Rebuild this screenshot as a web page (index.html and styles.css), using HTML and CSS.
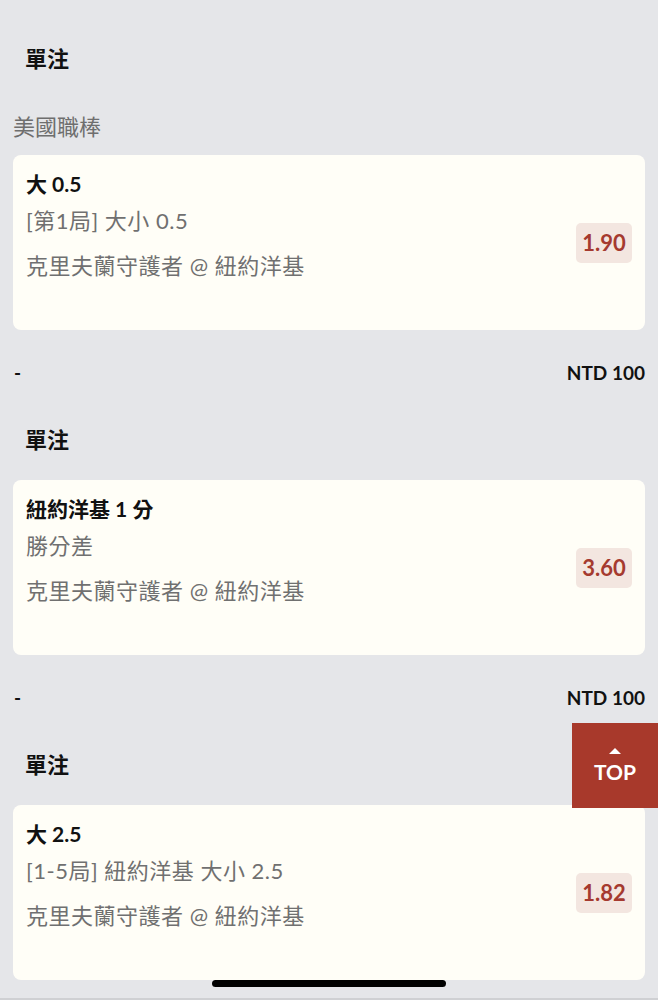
FILE: index.html
```html
<!DOCTYPE html>
<html lang="zh-Hant">
<head>
    <meta charset="UTF-8">
    <meta name="viewport" content="width=device-width, initial-scale=1.0">
    <title>單注</title>
    <link rel="stylesheet" href="styles.css">
</head>
<body>
    <div class="bet-list">
        <div class="bet">
            <div class="bet-head">單注</div>
            <div class="league">美國職棒</div>
            <div class="card">
                <div class="card-info">
                    <div class="pick">大 0.5</div>
                    <div class="market">[第1局] 大小 0.5</div>
                    <div class="teams">克里夫蘭守護者 @ 紐約洋基</div>
                </div>
                <div class="odds">1.90</div>
            </div>
            <div class="bet-foot">
                <span>-</span>
                <span class="stake">NTD 100</span>
            </div>
        </div>

        <div class="bet">
            <div class="bet-head">單注</div>
            <div class="card">
                <div class="card-info">
                    <div class="pick">紐約洋基 1 分</div>
                    <div class="market">勝分差</div>
                    <div class="teams">克里夫蘭守護者 @ 紐約洋基</div>
                </div>
                <div class="odds">3.60</div>
            </div>
            <div class="bet-foot">
                <span>-</span>
                <span class="stake">NTD 100</span>
            </div>
        </div>

        <div class="bet">
            <div class="bet-head">單注</div>
            <div class="card">
                <div class="card-info">
                    <div class="pick">大 2.5</div>
                    <div class="market">[1-5局] 紐約洋基 大小 2.5</div>
                    <div class="teams">克里夫蘭守護者 @ 紐約洋基</div>
                </div>
                <div class="odds">1.82</div>
            </div>
        </div>
    </div>

    <a class="to-top" href="#">
        <span class="arrow"></span>
        <span>TOP</span>
    </a>
    <div class="home-bar"></div>
    <div class="bottom-edge"></div>
</body>
</html>
```

FILE: styles.css
```css
/* Bet slip list */
body {
    margin: 0;
    background-color: #e5e6e9;
    font-family: Lato, "Noto Sans CJK TC", sans-serif;
    color: #111;
}
.bet-list {
    padding: 34px 13px 40px;
}
.bet-head {
    height: 50px;
    line-height: 50px;
    padding-left: 12px;
    font-size: 22px;
    font-weight: 700;
    margin-bottom: 15px;
}
.league {
    height: 56px;
    line-height: 56px;
    margin-top: -15px;
    padding-top: 15px;
    font-size: 22px;
    color: #6e6e6e;
}
.card {
    display: flex;
    align-items: center;
    justify-content: space-between;
    height: 175px;
    box-sizing: border-box;
    padding: 13px;
    background-color: #fffef7;
    border-radius: 8px;
}
.card-info {
    align-self: flex-start;
}
.pick {
    font-size: 21px;
    font-weight: 700;
    line-height: 32px;
}
.market,
.teams {
    font-size: 22px;
    letter-spacing: 0.5px;
    line-height: 36px;
    color: #707070;
}
.market {
    margin-top: 3px;
}
.teams {
    margin-top: 9px;
}
.odds {
    width: 56px;
    height: 40px;
    line-height: 40px;
    text-align: center;
    border-radius: 5px;
    background-color: #f3e6e0;
    color: #a53a2f;
    font-size: 22px;
    font-weight: 700;
}
.bet-foot {
    display: flex;
    justify-content: space-between;
    height: 50px;
    line-height: 50px;
    margin: 18px 0 17px;
    padding-left: 1px;
    font-size: 19px;
    font-weight: 700;
}
.to-top {
    position: fixed;
    right: 0;
    top: 723px;
    width: 86px;
    height: 85px;
    display: flex;
    flex-direction: column;
    align-items: center;
    justify-content: center;
    background-color: #a8392b;
    color: #fff;
    text-decoration: none;
    font-size: 21px;
    font-weight: 700;
}
.to-top .arrow {
    width: 0;
    height: 0;
    border-left: 6px solid transparent;
    border-right: 6px solid transparent;
    border-bottom: 6px solid #fff;
    margin-bottom: 5px;
}
.home-bar {
    position: fixed;
    left: 212px;
    bottom: 13px;
    width: 234px;
    height: 7px;
    border-radius: 4px;
    background-color: #000;
}
.bottom-edge {
    position: fixed;
    left: 0;
    right: 0;
    bottom: 0;
    height: 2px;
    background-color: #cfd0d3;
}
```
